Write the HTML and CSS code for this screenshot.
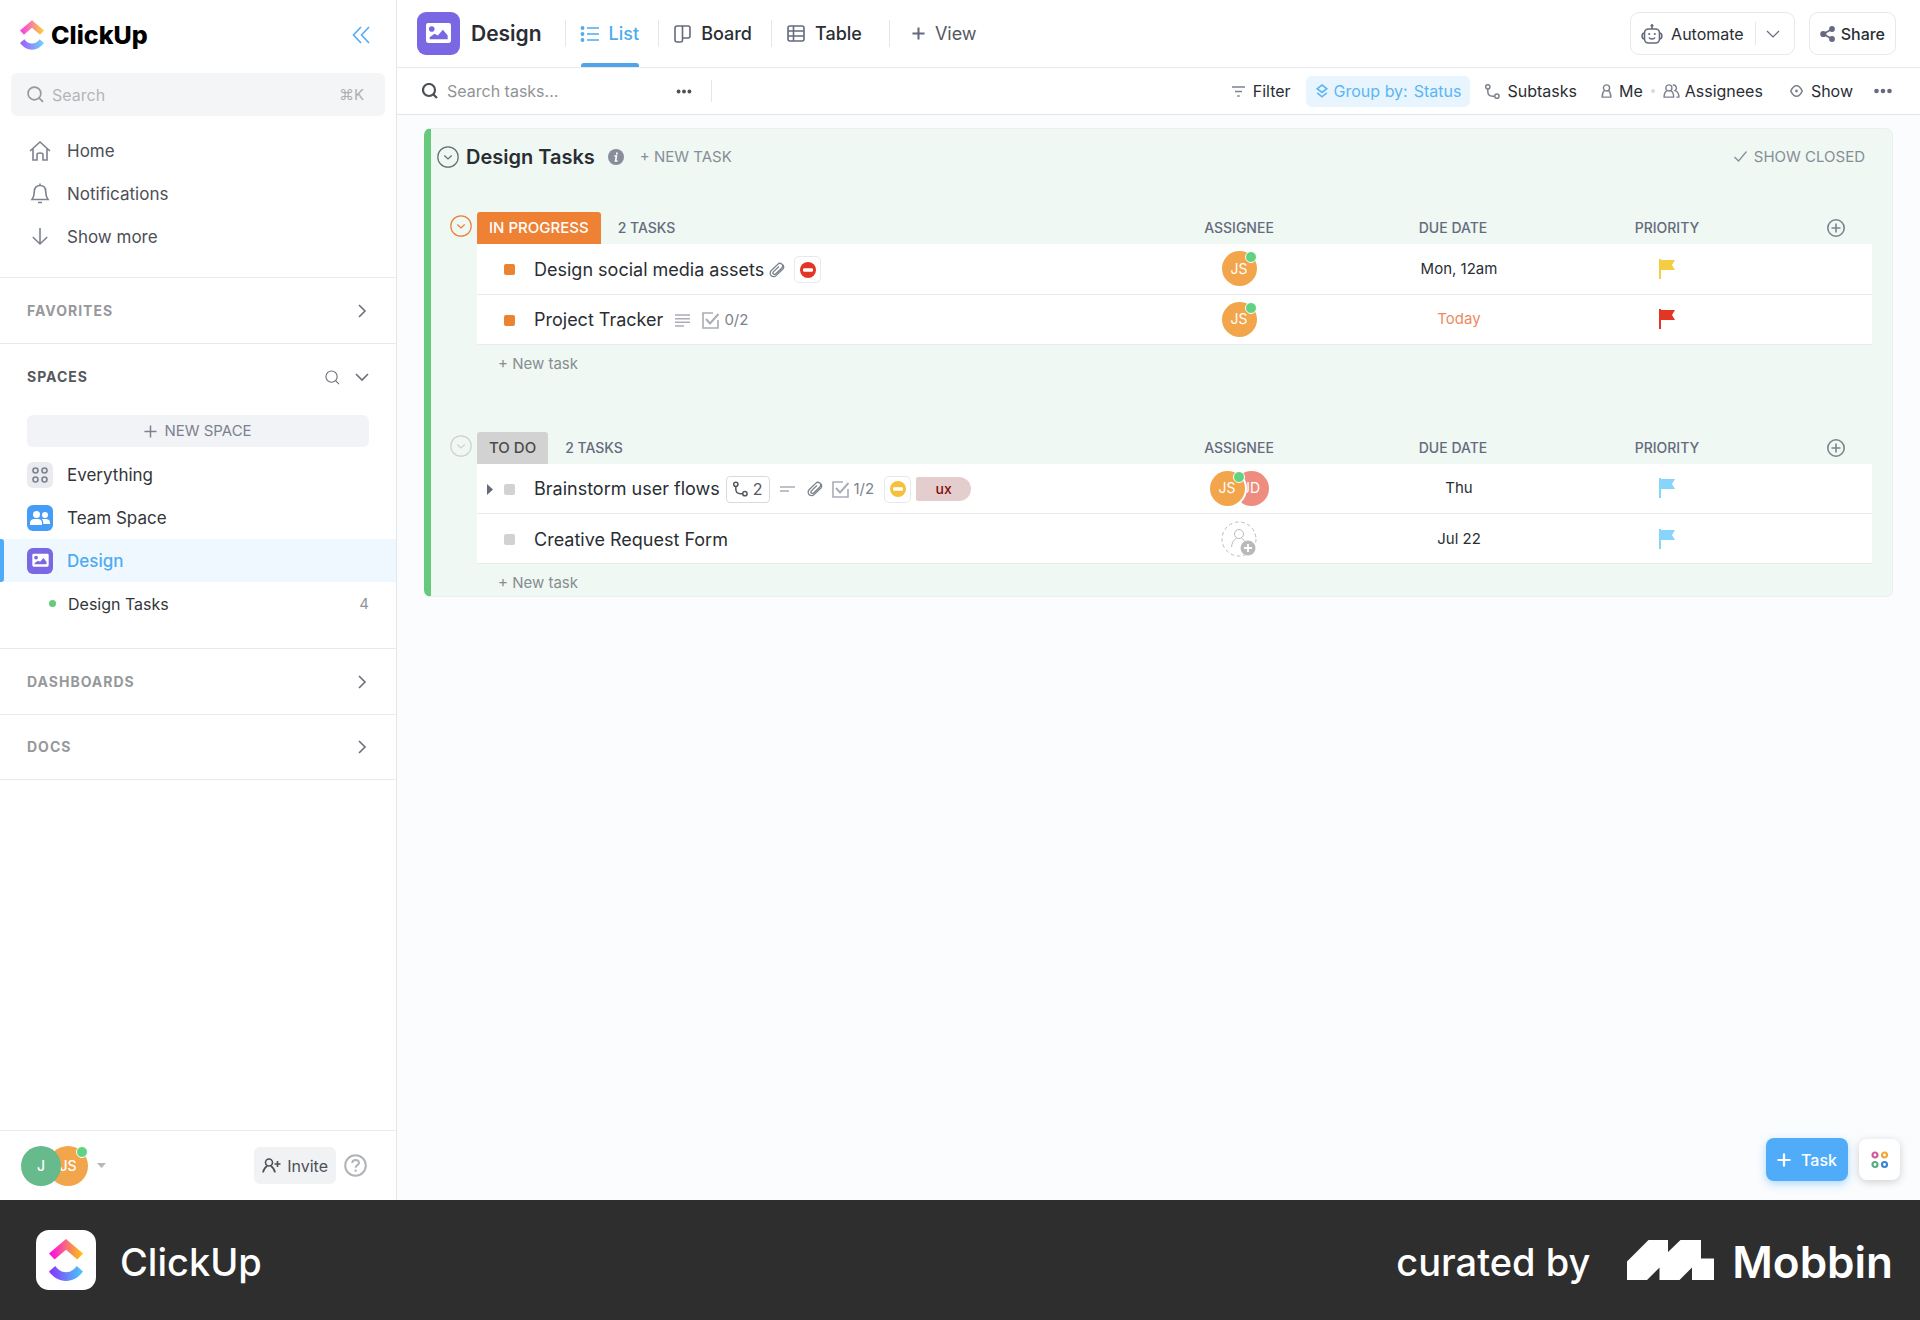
FILE: index.html
```html
<!DOCTYPE html>
<html lang="en">
<head>
<meta charset="utf-8">
<title>Design | ClickUp</title>
<meta name="viewport" content="width=device-width, initial-scale=1">
<link rel="stylesheet" href="styles.css">
</head>
<body>
<svg class="defs" aria-hidden="true">
  <defs>
    <linearGradient id="warm" x1="0" y1="0" x2="1" y2="0"><stop offset="0" stop-color="#ff02f0"/><stop offset=".5" stop-color="#f76b7d"/><stop offset="1" stop-color="#ffc800"/></linearGradient>
    <linearGradient id="cool" x1="0" y1="0" x2="1" y2="0"><stop offset="0" stop-color="#8930fd"/><stop offset="1" stop-color="#49ccf9"/></linearGradient>
    <symbol id="logo" viewBox="0 0 34 42"><path d="M0 14.5 17 0l17 14.5-5.6 6L17 10.8 5.6 20.500z" fill="url(#warm)"/><path d="M0 32.500l6.200-5.500c3 4 6.600 6.200 10.800 6.200s7.800-2.200 10.800-6.200l6.200 5.500C29.500 38.600 23.800 42 17 42S4.500 38.600 0 32.500z" fill="url(#cool)"/></symbol>
    <symbol id="search" viewBox="0 0 16 16"><circle cx="7" cy="7" r="6"/><path d="m11.500 11.500 3.500 3.500"/></symbol>
    <symbol id="plus" viewBox="0 0 14 14"><path d="M7 .5v13M.5 7h13"/></symbol>
    <symbol id="right" viewBox="0 0 14 14"><path d="m4 1 6 6-6 6"/></symbol>
    <symbol id="down" viewBox="0 0 14 14"><path d="m1 4 6 6 6-6"/></symbol>
    <symbol id="image" viewBox="0 0 24 22"><path fill-rule="evenodd" d="M2 1h20a2 2 0 0 1 2 2v15a2 2 0 0 1-2 2H2a2 2 0 0 1-2-2V3a2 2 0 0 1 2-2zm3.500 3a2.700 2.700 0 1 0 0 5.400 2.700 2.700 0 0 0 0-5.400zM3.500 16.500h17.300v-3.600l-4.600-5.600-4.800 5.700-3.200-1.800-4.700 3.300z"/></symbol>
    <symbol id="clip" viewBox="0 0 16 16"><path d="m12.600 8.200-5.500 5.400a3.400 3.400 0 0 1-5-4.800l6.800-6.700a2.700 2.700 0 0 1 3.900 0 2.700 2.700 0 0 1 0 3.900L6.600 12a1.500 1.500 0 0 1-2.200-2.100l5.500-5.400M12.800 2.100a3.500 3.500 0 0 1 1.500 4.500l-1.700 1.600"/></symbol>
    <symbol id="check" viewBox="0 0 17 17"><path d="M11 1H1v15h15V8"/><path d="m4 7 4 4.500L16.500 2" stroke-width="2"/></symbol>
    <symbol id="branch" viewBox="0 0 16 16"><circle cx="3" cy="3" r="2.300"/><circle cx="12.700" cy="13" r="2.300"/><path d="M3 5.300V8c0 3.500 1.500 5 5 5h2.400"/></symbol>
    <symbol id="flag" viewBox="0 0 16 20"><path d="M0 0h2v20H0z"/><path d="M2 1h14l-3 5 3 5H2z"/></symbol>
    <symbol id="person" viewBox="0 0 12 16"><circle cx="6" cy="4.500" r="3.500"/><path d="M3.700 7.500C2 9 1 11 1 15h10c0-4-1-6-2.700-7.500"/></symbol>
    <symbol id="ring-down" viewBox="0 0 22 22"><circle cx="11" cy="11" r="10.200"/><path d="m7.300 9.500 3.700 3.500 3.700-3.500"/></symbol>
    <symbol id="ring-plus" viewBox="0 0 18 18"><circle cx="9" cy="9" r="8.200"/><path d="M9 4.500v9M4.500 9h9"/></symbol>
    <symbol id="dots" viewBox="0 0 18 6"><circle cx="2.500" cy="3" r="2.300"/><circle cx="9" cy="3" r="2.300"/><circle cx="15.500" cy="3" r="2.300"/></symbol>
    <symbol id="four" viewBox="0 0 16 16"><circle cx="3.500" cy="3.500" r="2.500"/><circle cx="12.500" cy="3.500" r="2.500"/><circle cx="3.500" cy="12.500" r="2.500"/><circle cx="12.500" cy="12.500" r="2.500"/></symbol>
    <symbol id="blocked" viewBox="0 0 16 16"><circle cx="8" cy="8" r="8"/><rect x="3" y="6.300" width="10" height="3.400" rx="1.200" fill="#fff"/></symbol>
  </defs>
</svg>

<div class="app">
  <aside class="sidebar">
    <div class="brand">
      <svg class="brand-mark"><use href="#logo"/></svg>
      <span class="brand-name">ClickUp</span>
      <button class="icon-btn collapse" aria-label="Collapse sidebar"><svg class="line" width="18" height="18" viewBox="0 0 18 18"><path d="M9 1 1.500 9 9 17M17 1 9.500 9l7.500 8"/></svg></button>
    </div>
    <label class="search">
      <svg class="line" width="17" height="17"><use href="#search"/></svg>
      <input type="search" placeholder="Search" aria-label="Search">
      <kbd>⌘K</kbd>
    </label>
    <nav class="main-nav">
      <a href="#home"><span class="nav-icon"><svg class="line" width="22" height="20" viewBox="0 0 22 20"><path d="M1 10 11 1l10 9M4 8v11h4v-5.500c0-2 6-2 6 0V19h4V8"/></svg></span>Home</a>
      <a href="#notifications"><span class="nav-icon"><svg class="line" width="18" height="21" viewBox="0 0 18 21"><path d="M1 16.500h16c-1.500-2-2.300-3.500-2.300-8C14.700 4.800 12.500 2.500 9 2.500S3.300 4.800 3.300 8.500c0 4.500-.8 6-2.300 8zM9 .5v2M7 19.500h4"/></svg></span>Notifications</a>
      <a href="#more"><span class="nav-icon"><svg class="line" width="16" height="17" viewBox="0 0 16 17"><path d="M8 0v16M.8 9 8 16l7.200-7"/></svg></span>Show more</a>
    </nav>
    <section class="fold"><h2>FAVORITES</h2><button class="icon-btn" aria-label="Open favorites"><svg class="line" width="14" height="14"><use href="#right"/></svg></button></section>
    <section class="spaces">
      <div class="spaces-head"><h2>SPACES</h2>
        <button class="icon-btn" aria-label="Search spaces"><svg class="line thin" width="15" height="15"><use href="#search"/></svg></button>
        <button class="icon-btn" aria-label="Fold spaces"><svg class="line" width="14" height="14"><use href="#down"/></svg></button>
      </div>
      <button class="new-space"><svg class="line" width="13" height="13"><use href="#plus"/></svg>NEW SPACE</button>
      <nav class="space-list">
        <a href="#everything"><span class="badge grey"><svg class="line" width="16" height="16"><use href="#four"/></svg></span>Everything</a>
        <a href="#team"><span class="badge blue"><svg width="20" height="14" viewBox="0 0 20 14"><circle cx="6.500" cy="3.500" r="3.500"/><circle cx="15" cy="4" r="3"/><path d="M0 14v-2c0-2.500 2-4 4-4h4c2.500 0 4 1.500 4 4v2zM13.200 13v-1.500c0-1.600-.5-2.700-1.400-3.500H16c2.500 0 4 1.500 4 3.500V13z"/></svg></span>Team Space</a>
        <a href="#design" class="active"><span class="badge purple"><svg width="17" height="15"><use href="#image"/></svg></span>Design</a>
        <a href="#design-tasks" class="child"><span class="dot"></span>Design Tasks<span class="count">4</span></a>
      </nav>
    </section>
    <section class="fold"><h2>DASHBOARDS</h2><button class="icon-btn" aria-label="Open dashboards"><svg class="line" width="14" height="14"><use href="#right"/></svg></button></section>
    <section class="fold"><h2>DOCS</h2><button class="icon-btn" aria-label="Open docs"><svg class="line" width="14" height="14"><use href="#right"/></svg></button></section>
    <div class="user-bar">
      <span class="avatar large green">J</span><span class="avatar large orange under">JS<i class="online"></i></span>
      <svg class="caret" width="9" height="5" viewBox="0 0 9 5"><path d="M0 0h9L4.500 5z"/></svg>
      <button class="invite"><svg class="line" width="19" height="15" viewBox="0 0 19 15"><circle cx="7" cy="4.500" r="3.500"/><path d="M1 14.500C1.500 11 3 9.500 5 8M13 14.500C12.500 11 11 9.500 9 8M15.500 3v6M12.500 6h6"/></svg>Invite</button>
      <button class="icon-btn help" aria-label="Help"><svg class="line" width="23" height="23" viewBox="0 0 23 23"><circle cx="11.500" cy="11.500" r="10.300"/><path d="M8.200 9c.2-4 6.800-4 6.800-.2 0 2.500-3.400 2.200-3.400 5M11.600 15.500v2.200"/></svg></button>
    </div>
  </aside>

  <main class="main">
    <header class="topbar">
      <span class="badge purple big"><svg width="25" height="23"><use href="#image"/></svg></span>
      <h1>Design</h1>
      <nav class="tabs">
        <a href="#list" class="current"><svg class="line" width="18" height="16" viewBox="0 0 18 16"><path d="M6 2h12M6 8h12M6 14h12"/><g class="solid"><circle cx="1.500" cy="2" r="1.900"/><circle cx="1.500" cy="8" r="1.900"/><circle cx="1.500" cy="14" r="1.900"/></g></svg>List</a>
        <a href="#board"><svg class="line" width="17" height="18" viewBox="0 0 17 18"><path d="M3 1h11q2 0 2 2v8q0 2-2 2H8.500v2q0 2-2 2H3q-2 0-2-2V3q0-2 2-2zM8.500 1v12"/></svg>Board</a>
        <a href="#table"><svg class="line" width="18" height="17" viewBox="0 0 18 17"><rect x="1" y="1" width="16" height="15" rx="2"/><path d="M1 6h16M1 11h16M6.500 1v15"/></svg>Table</a>
        <a href="#view" class="add"><svg class="line bold" width="13" height="13"><use href="#plus"/></svg>View</a>
      </nav>
      <div class="split">
        <button><svg class="line" width="22" height="20" viewBox="0 0 22 20"><rect x="3.500" y="5" width="15" height="14" rx="4"/><path d="M11 5V2.500M3.500 9C.3 9 .3 15 3.500 15M18.500 9c3.200 0 3.200 6 0 6M8 13.500c1 2 5 2 6 0"/><g class="solid"><circle cx="11" cy="1.500" r="1.500"/><circle cx="8.200" cy="10" r="1.100"/><circle cx="13.800" cy="10" r="1.100"/></g></svg>Automate</button>
        <button class="split-more" aria-label="Automation menu"><svg class="line thin" width="14" height="14"><use href="#down"/></svg></button>
      </div>
      <button class="share"><svg width="15" height="16" viewBox="0 0 15 16"><circle cx="3.300" cy="8" r="3.100"/><circle cx="12" cy="3" r="2.900"/><circle cx="12" cy="13" r="2.900"/><path class="line" d="M12 3 3.300 8l8.700 5"/></svg>Share</button>
    </header>

    <div class="toolbar">
      <label class="task-search"><svg class="line bold" width="16" height="16"><use href="#search"/></svg><input type="search" placeholder="Search tasks..." aria-label="Search tasks"></label>
      <button class="icon-btn search-more" aria-label="Search options"><svg width="16" height="5"><use href="#dots"/></svg></button>
      <div class="filters">
        <button class="f-filter"><svg class="line" width="13" height="11" viewBox="0 0 13 11"><path d="M0 1h13M3 5.500h7M5.300 10h2.400"/></svg>Filter</button>
        <button class="f-group"><svg class="line" width="12" height="14" viewBox="0 0 12 14"><path d="m6 1 4.800 3.700L6 8.400 1.200 4.700zM1.200 8.800 6 12.800l4.800-4"/></svg>Group by: <span>Status</span></button>
        <button class="f-sub"><svg class="line" width="15" height="15"><use href="#branch"/></svg>Subtasks</button>
        <button class="f-me"><svg class="line" width="11" height="14"><use href="#person"/></svg>Me</button>
        <span class="tiny-dot"></span>
        <button class="f-assign"><svg class="line" width="17" height="14" viewBox="0 0 19 16"><circle cx="6.500" cy="4.500" r="3.500"/><path d="M4.200 7.500C2 9 1 11 1 15h11c0-4-1-6-3.200-7.500M11 1.200c4-.8 5.500 4.500 2.500 6.300C16.500 8.500 18 11 18 15h-3"/></svg>Assignees</button>
        <button class="f-show"><svg class="line" width="13" height="12" viewBox="0 0 13 12"><path d="M.8 6c3-7 8.400-7 11.400 0-3 7-8.400 7-11.400 0z"/><circle class="solid" cx="6.500" cy="6" r="1.400"/></svg>Show</button>
        <button class="icon-btn f-more" aria-label="More options"><svg width="18" height="6"><use href="#dots"/></svg></button>
      </div>
    </div>

    <div class="canvas">
      <section class="panel">
        <div class="panel-head">
          <button class="icon-btn" aria-label="Fold list"><svg class="line thin" width="22" height="22"><use href="#ring-down"/></svg></button>
          <h2>Design Tasks</h2>
          <svg class="info" width="16" height="16" viewBox="0 0 16 16"><circle cx="8" cy="8" r="8"/><path class="line info-i" d="M6.500 7h2L7.500 12h2M8.800 3.500v2"/></svg>
          <button class="text-btn">+ NEW TASK</button>
          <button class="text-btn closed"><svg class="line thin" width="13" height="11" viewBox="0 0 13 11"><path d="m.5 6 4 4L12.500.5"/></svg>SHOW CLOSED</button>
        </div>

        <section class="group">
          <button class="icon-btn fold-group orange-line" aria-label="Fold in progress"><svg class="line thin" width="22" height="22"><use href="#ring-down"/></svg></button>
          <div class="group-body">
            <table>
              <colgroup><col><col class="c-field"><col class="c-field"><col class="c-field"><col class="c-add"></colgroup>
              <thead><tr>
                <th scope="col" class="name-head"><div><span class="status in-progress">IN PROGRESS</span><span>2 TASKS</span></div></th>
                <th scope="col">ASSIGNEE</th><th scope="col">DUE DATE</th><th scope="col">PRIORITY</th>
                <th scope="col" class="add-col"><button class="icon-btn" aria-label="Add column"><svg class="line" width="18" height="18"><use href="#ring-plus"/></svg></button></th>
              </tr></thead>
              <tbody>
                <tr>
                  <td><div class="task"><span class="expander"></span><span class="square orange"></span><a href="#t1">Design social media assets</a><svg class="line clip" width="16" height="16"><use href="#clip"/></svg><span class="flagbox"><svg class="red" width="16" height="16"><use href="#blocked"/></svg></span></div></td>
                  <td><div class="people"><span class="avatar orange">JS<i class="online"></i></span></div></td>
                  <td class="due">Mon, 12am</td>
                  <td><svg class="yellow" width="16" height="20"><use href="#flag"/></svg></td><td></td>
                </tr>
                <tr>
                  <td><div class="task"><span class="expander"></span><span class="square orange"></span><a href="#t2">Project Tracker</a><svg class="line pale desc" width="15" height="13" viewBox="0 0 15 13"><path d="M0 1h15M0 4.700h15M0 8.300h15M0 12h9"/></svg><span class="checks"><svg class="line pale" width="17" height="17"><use href="#check"/></svg>0/2</span></div></td>
                  <td><div class="people"><span class="avatar orange">JS<i class="online"></i></span></div></td>
                  <td class="due today">Today</td>
                  <td><svg class="red" width="16" height="20"><use href="#flag"/></svg></td><td></td>
                </tr>
              </tbody>
            </table>
            <button class="new-task">+ New task</button>
          </div>
        </section>

        <section class="group">
          <button class="icon-btn fold-group grey-line" aria-label="Fold to do"><svg class="line thin" width="22" height="22"><use href="#ring-down"/></svg></button>
          <div class="group-body">
            <table>
              <colgroup><col><col class="c-field"><col class="c-field"><col class="c-field"><col class="c-add"></colgroup>
              <thead><tr>
                <th scope="col" class="name-head"><div><span class="status to-do">TO DO</span><span>2 TASKS</span></div></th>
                <th scope="col">ASSIGNEE</th><th scope="col">DUE DATE</th><th scope="col">PRIORITY</th>
                <th scope="col" class="add-col"><button class="icon-btn" aria-label="Add column"><svg class="line" width="18" height="18"><use href="#ring-plus"/></svg></button></th>
              </tr></thead>
              <tbody>
                <tr>
                  <td><div class="task"><span class="expander"><svg width="6" height="11" viewBox="0 0 6 11"><path d="M0 0l6 5.500L0 11z"/></svg></span><span class="square"></span><a href="#t3">Brainstorm user flows</a><span class="subcount"><svg class="line" width="15" height="16"><use href="#branch"/></svg>2</span><svg class="line pale brief" width="15" height="6" viewBox="0 0 15 6"><path d="M0 1h15M0 5h9"/></svg><svg class="line clip" width="16" height="16"><use href="#clip"/></svg><span class="checks"><svg class="line pale" width="17" height="17"><use href="#check"/></svg>1/2</span><span class="flagbox"><svg class="amber" width="16" height="16"><use href="#blocked"/></svg></span><span class="tag">ux</span></div></td>
                  <td><div class="people"><span class="avatar orange front">JS<i class="online"></i></span><span class="avatar pink under">JD</span></div></td>
                  <td class="due">Thu</td>
                  <td><svg class="sky" width="16" height="20"><use href="#flag"/></svg></td><td></td>
                </tr>
                <tr>
                  <td><div class="task"><span class="expander"></span><span class="square"></span><a href="#t4">Creative Request Form</a></div></td>
                  <td><div class="people"><button class="icon-btn" aria-label="Assign"><svg class="unassigned" width="36" height="36" viewBox="0 0 36 36"><circle cx="18" cy="18" r="17" stroke-dasharray="3.500 2.800"/><circle cx="18" cy="13" r="4.500"/><path d="M10.500 26c.3-4 2-7 5-8.800M20.500 17.200c1.500.8 2.700 2 3.500 3.500"/><circle cx="27" cy="27" r="7.500" fill="#b9b9b9" stroke="none"/><path d="M27 23v8M23 27h8" stroke="#fff" stroke-width="1.800"/></svg></button></div></td>
                  <td class="due">Jul 22</td>
                  <td><svg class="sky" width="16" height="20"><use href="#flag"/></svg></td><td></td>
                </tr>
              </tbody>
            </table>
            <button class="new-task">+ New task</button>
          </div>
        </section>
      </section>
      <div class="actions">
        <button class="add-task"><svg class="line bold" width="14" height="14"><use href="#plus"/></svg>Task</button>
        <button class="apps" aria-label="Apps"><svg class="rings" width="18" height="18" viewBox="0 0 18 18"><circle cx="4" cy="4" r="2.500" stroke="#d3589a"/><circle cx="13.500" cy="4" r="2.500" stroke="#f0a92e"/><circle cx="4" cy="13.500" r="2.500" stroke="#5aab84"/><circle cx="13.500" cy="13.500" r="2.500" stroke="#3a86cf"/></svg></button>
      </div>
    </div>
  </main>
</div>

<footer class="credit">
  <span class="credit-app"><svg width="34" height="42"><use href="#logo"/></svg></span>
  <span class="credit-text">ClickUp</span>
  <span class="credit-text credit-by">curated by</span>
  <svg class="mobbin" width="87" height="40" viewBox="0 0 87 40"><path d="M0 21.500 21.500 0H41v12L53.500 0H74v18.500h13V40H65V27.500L52.500 40H32.500V27.500L20 40H0z"/></svg>
  <span class="credit-text credit-brand">Mobbin</span>
</footer>
</body>
</html>
```
FILE: styles.css
```css
* { box-sizing: border-box; }
body {
  margin: 0;
  min-height: 100vh;
  display: flex;
  flex-direction: column;
  font-family: Inter, "Liberation Sans", sans-serif;
  font-size: 16px;
  line-height: 20px;
  color: #2a2e34;
  background: #fafcfe;
}
h1, h2 { margin: 0; }
a { color: inherit; text-decoration: none; }
button { margin: 0; padding: 0; border: 0; background: none; font: inherit; color: inherit; display: flex; align-items: center; white-space: nowrap; }
input { border: 0; padding: 0; margin: 0; background: none; font: inherit; color: inherit; outline: none; min-width: 0; appearance: none; }
svg { flex: none; display: block; fill: currentColor; overflow: visible; }
.defs { position: absolute; width: 0; height: 0; }
.line { fill: none; stroke: currentColor; stroke-width: 1.6; }
.thin { stroke-width: 1.2; }
.bold { stroke-width: 2.2; }
.solid { fill: currentColor; stroke: none; }

.app { flex: 1; display: flex; }

/* Sidebar */
.sidebar { width: 397px; flex: none; display: flex; flex-direction: column; background: #fff; border-right: 1px solid #e4e7ea; }
.brand { display: flex; align-items: center; height: 73px; padding: 0 26px 3px 20px; gap: 7px; }
.brand-mark { width: 24px; height: 30px; opacity: .8; }
.brand-name { font-size: 25px; font-weight: 800; color: #000; line-height: 30px; }
.collapse { margin-left: auto; color: #4fabf7; }
.search { display: flex; align-items: center; gap: 8px; height: 43px; margin: 0 11px; padding: 0 21px 0 16px; border-radius: 6px; background: #f4f5f7; color: #999; }
.search input { flex: 1; }
.search input::placeholder { color: #b3b5b8; opacity: 1; }
.search kbd { font: inherit; font-size: 15px; color: #adafb2; }
.main-nav { padding: 13px 0 19px; color: #4c5057; font-size: 17px; }
.main-nav a { display: flex; align-items: center; height: 43px; padding-left: 27px; gap: 14px; }
.nav-icon { width: 26px; display: flex; justify-content: center; color: #7c828d; }
.fold, .spaces { border-top: 1px solid #e8eaed; }
.fold { display: flex; align-items: center; justify-content: space-between; height: 66px; padding: 0 27px; color: #6a6f78; }
.sidebar h2 { font-size: 14px; font-weight: 700; letter-spacing: 1px; color: #96989b; }
.sidebar .spaces h2 { color: #54585d; flex: 1; }
.spaces-head { display: flex; align-items: center; gap: 15px; height: 66px; padding: 0 27px; color: #6a6f78; }
.new-space { width: 342px; height: 32px; margin: 5px 27px 6px; justify-content: center; gap: 7px; border-radius: 6px; background: #f2f3f7; color: #7c828d; font-size: 15px; }
.space-list { padding-bottom: 23px; font-size: 17px; color: #33363b; }
.space-list a { display: flex; align-items: center; gap: 14px; height: 43px; padding: 0 27px; }
.space-list .active { position: relative; color: #4fabf0; background: #f0f8ff; font-weight: 500; }
.space-list .active::before { content: ""; position: absolute; left: 0; top: 0; bottom: 0; width: 4px; border-radius: 0 3px 3px 0; background: #4fabf7; }
.space-list .child { font-size: 16px; padding-left: 49px; gap: 12px; }
.dot { width: 7px; height: 7px; border-radius: 50%; background: #66c97c; }
.count { margin-left: auto; font-size: 15px; color: #919396; }
.badge { width: 26px; height: 26px; border-radius: 6px; display: flex; align-items: center; justify-content: center; color: #fff; }
.badge.grey { background: #e9ebee; color: #7c828d; }
.badge.blue { background: #459df8; }
.badge.purple { background: #7a67e3; }
.badge.big { width: 43px; height: 43px; border-radius: 9px; }
.fold:nth-last-of-type(1) { border-bottom: 1px solid #e8eaed; }
.user-bar { margin-top: auto; display: flex; align-items: center; height: 70px; padding: 0 29px 0 21px; border-top: 1px solid #e8eaed; }
.caret { margin-left: 9px; color: #b5b8bd; }
.invite { margin-left: auto; height: 37px; padding: 0 8px; gap: 6px; border-radius: 6px; background: #f1f2f4; color: #4c5057; }
.help { margin-left: 8px; color: #b0b3b8; }
.help .line { stroke-width: 2; }

/* Avatars */
.avatar { position: relative; width: 35px; height: 35px; border-radius: 50%; display: flex; align-items: center; justify-content: center; font-size: 14px; color: #fff; }
.avatar.large { width: 40px; height: 40px; font-weight: 500; }
.avatar.green { background: #67ba8c; z-index: 1; }
.avatar.orange { background: #f2a54a; }
.avatar.pink { background: #ef8c80; }
.avatar.front { z-index: 1; box-shadow: 0 0 0 2px #fff; }
.avatar.under { margin-left: -11px; }
.avatar.large.under { margin-left: -13px; }
.online { position: absolute; top: 0; right: 0; width: 12px; height: 12px; border: 1px solid #fff; border-radius: 50%; background: #5fd381; }

/* Header */
.main { flex: 1; min-width: 0; display: flex; flex-direction: column; }
.topbar { display: flex; align-items: center; height: 68px; padding: 0 24px 0 20px; background: #fff; border-bottom: 1px solid #e8eaed; }
.topbar h1 { margin: 0 23px 0 11px; font-size: 21px; font-weight: 600; }
.tabs { display: flex; align-self: stretch; font-size: 18px; font-weight: 500; margin-right: auto; }
.tabs a { position: relative; display: flex; align-items: center; gap: 10px; padding: 0 19px 0 16px; }
.tabs a::before { content: ""; position: absolute; left: 0; top: 20px; width: 1px; height: 27px; background: #e4e6e9; }
.tabs svg { color: #656b7d; }
.tabs .current, .tabs .current svg { color: #4fabf0; }
.tabs .current::after { content: ""; position: absolute; left: 16px; right: 19px; bottom: 0; height: 4px; border-radius: 3px 3px 0 0; background: #4fa4ea; }
.tabs .add { margin-left: 8px; padding-left: 23px; color: #54585f; font-weight: 400; }
.split, .share { height: 43px; border: 1px solid #e6e8eb; border-radius: 9px; color: #2a2e34; }
.split { display: flex; align-items: center; margin-right: 14px; }
.split > button { gap: 8px; padding: 0 11px 0 10px; }
.split .split-more { height: 23px; padding: 0 14px 0 10px; border-left: 1px solid #e6e8eb; color: #656b7d; }
.split button svg, .share svg { color: #656b7d; }
.share { padding: 0 10px; gap: 6px; font-weight: 500; }

/* Toolbar */
.toolbar { display: flex; align-items: center; height: 47px; padding: 0 28px 0 25px; background: #fff; border-bottom: 1px solid #e4e7ea; }
.task-search { display: flex; align-items: center; gap: 9px; color: #4c5057; }
.task-search input { width: 229px; }
.task-search input::placeholder { color: #919396; opacity: 1; }
.search-more { height: 22px; padding-right: 19px; border-right: 1px solid #e4e6e9; color: #4c5057; }
.filters { display: flex; align-items: center; margin-left: auto; }
.filters button { gap: 8px; }
.filters svg { color: #7c828d; }
.filters .f-group { height: 31px; margin: 0 15px; padding: 0 9px 0 10px; gap: 6px; border-radius: 6px; background: #e8f5fe; color: #5cb5f5; }
.filters .f-group svg { color: inherit; }
.filters .f-more svg { color: #656b7d; }
.filters .f-sub, .filters .f-me { gap: 7px; }
.f-me { margin-left: 24px; }
.tiny-dot { width: 4px; height: 4px; margin: 0 8px; border-radius: 50%; background: #d8dadd; }
.filters .f-assign { gap: 5px; }
.f-show { margin: 0 21px 0 27px; }

/* List */
.canvas { flex: 1; display: flex; flex-direction: column; padding: 13px 27px 19px; }
.panel { padding: 0 20px 0 6px; border: 1px solid #eceff0; border-left: 7px solid #66c97c; border-radius: 7px; background: #eff8f3; }
.panel-head { display: flex; align-items: center; height: 55px; color: #656b70; }
.panel-head h2 { margin: 0 13px 0 7px; font-size: 20px; font-weight: 600; color: #2a2e34; }
.info { color: #878e99; margin-right: 16px; }
.info-i { color: #fff; }
.text-btn { font-size: 15px; gap: 7px; color: #878d96; }
.closed { margin-left: auto; padding-right: 7px; }
.group { display: flex; padding-left: 13px; margin-top: 28px; }
.group + .group { margin-top: 55px; }
.fold-group { align-self: flex-start; margin: 3px 5px 0 0; }
.orange-line { color: #ea7f35; }
.grey-line { color: #cfd1d3; }
.group-body { flex: 1; min-width: 0; }
table { width: 100%; table-layout: fixed; border-collapse: collapse; }
.c-field { width: 214px; }
.c-add { width: 98px; }
th { height: 32px; padding: 0; font-size: 14px; font-weight: 500; color: #656b7d; }
.name-head div { display: flex; align-items: center; gap: 17px; }
.add-col { padding-left: 25px; color: #7c828d; }
.add-col button, td > svg { margin: 0 auto; }
.status { height: 32px; padding: 0 12px; font-size: 15px; line-height: 32px; border-radius: 3px 3px 0 0; }
.in-progress { background: #ee8133; color: #fff; }
.to-do { background: #d2d2d2; color: #4a4a4a; }
td { height: 50px; padding: 0; background: #fff; border-bottom: 1px solid #e8ecec; text-align: center; }
.task { display: flex; align-items: center; padding: 2px 0 0 10px; color: #7c828d; }
.task a { color: #2a2e34; font-size: 18px; }
.expander { width: 17px; color: #656b7d; }
.square { width: 11px; height: 11px; margin-right: 19px; border-radius: 2px; background: #d2d2d2; }
.square.orange { background: #ea8433; }
.task .clip { margin: 0 9px 0 5px; stroke-width: 1.3; }
.pale { color: #a9adb5; }
.pale.desc { margin: 0 12px; }
.pale.brief { margin: 0 7px 0 10px; }
.checks { display: flex; align-items: center; gap: 5px; font-size: 15px; margin-right: 10px; }
.flagbox { width: 27px; height: 27px; border: 1px solid #e8e8f0; border-radius: 5px; display: flex; align-items: center; justify-content: center; }
.subcount { display: flex; align-items: center; gap: 5px; height: 27px; margin-left: 6px; padding: 0 6px; border: 1px solid #d8dadd; border-radius: 4px; color: #54585f; }
.tag { width: 55px; height: 24px; margin-left: 5px; text-align: center; line-height: 24px; font-size: 14px; font-weight: 500; border-radius: 2px 12px 12px 2px; background: #e4cdcd; color: #850c0c; }
.red { color: #e23526; }
.yellow { color: #f3cd42; }
.amber { color: #f5c13c; }
.sky { color: #88d5fb; }
.people { display: flex; justify-content: center; }
.unassigned { fill: none; stroke: #bbb; }
.due { font-size: 15px; padding-left: 12px; }
.today { color: #eb8b62; }
.new-task { height: 26px; margin: 6px 0 0 21px; font-size: 15px; color: #878d90; }

/* Floating actions */
.actions { margin-top: auto; display: flex; justify-content: flex-end; align-items: center; gap: 11px; margin-right: -7px; }
.add-task { height: 43px; padding: 0 11px; gap: 10px; border-radius: 8px; background: #50acf9; color: #fff; font-weight: 500; box-shadow: 0 3px 8px #50acf970; }
.apps { width: 41px; height: 41px; justify-content: center; border-radius: 8px; background: #fff; box-shadow: 0 2px 8px #0000002e; }
.rings { fill: none; stroke-width: 2.2; }

/* Credit */
.credit { display: flex; align-items: center; height: 120px; padding: 0 27px 0 36px; background: #2e2e2e; color: #fff; font-size: 38px; font-weight: 500; line-height: 48px; }
.credit-app { width: 60px; height: 60px; margin-right: 24px; border-radius: 13px; background: #fff; display: flex; align-items: center; justify-content: center; }
.credit-text { padding-top: 3px; }
.credit-by { margin-left: auto; }
.mobbin { margin: 0 18px 0 37px; }
.credit-brand { font-size: 44px; font-weight: 600; }
```
